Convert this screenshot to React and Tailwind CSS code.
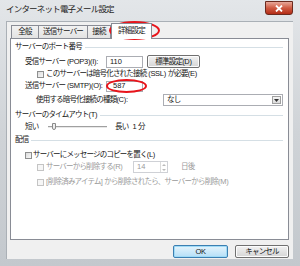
import React from "react";

const F = { fontFamily: "'Liberation Sans', 'Noto Sans CJK JP', sans-serif" };

function T({ children }) {
  const parts = String(children).split(/([\x20-\x7e]+)/);
  return (
    <>
      {parts.map((p, i) =>
        /^[\x20-\x7e]+$/.test(p) ? (
          <span key={i} className="tracking-[-0.3px]">{p}</span>
        ) : (
          <React.Fragment key={i}>{p}</React.Fragment>
        )
      )}
    </>
  );
}

function Check({ disabled }) {
  return (
    <span
      className={
        "inline-block w-[7px] h-[7px] shrink-0 border " +
        (disabled
          ? "border-[#c4c4c4] bg-[#f6f6f6]"
          : "border-[#8e8f8f] bg-gradient-to-br from-[#dcdcdc] to-[#f8f8f8]")
      }
    />
  );
}

function Header({ children }) {
  return (
    <div className="h-[12px] flex items-center pl-[4px] pr-[5px]">
      <span className="whitespace-nowrap"><T>{children}</T></span>
      <span className="flex-1 h-px bg-[#d5dfe5] ml-[3px]" />
    </div>
  );
}

function Btn({ children, def, className = "" }) {
  return (
    <div
      className={
        "flex items-center justify-center h-[13px] rounded-[2px] border " +
        (def
          ? "border-[#3c7fb1] bg-gradient-to-b from-[#e5f4fc] to-[#b5dff7] shadow-[inset_0_0_0_1px_#9fdbf7]"
          : "border-[#707070] bg-gradient-to-b from-[#f2f2f2] to-[#d5d5d5] shadow-[inset_0_0_0_1px_#fcfcfc]") +
        " " +
        className
      }
    >
      <T>{children}</T>
    </div>
  );
}

export default function App() {
  return (
    <div
      style={F}
      className="relative w-[300px] h-[266px] overflow-hidden text-[7.5px] tracking-[-0.8px] leading-none text-[#141414] bg-gradient-to-b from-[#e3e6e9] via-[#cfd3d7] to-[#c3c8cd]"
    >
      {/* title bar */}
      <div className="h-[21px] flex items-start">
        <span className="ml-[6px] mt-[5px] text-[8.5px] tracking-[-0.8px] text-[#222]">
          インターネット電子メール設定
        </span>
        <div className="ml-auto mr-[7px] mt-[1px] w-[28px] h-[14px] rounded-b-[3px] border border-[#6b2a1e] bg-gradient-to-b from-[#e6a89a] via-[#cf5a42] to-[#b32b14] flex items-center justify-center">
          <svg width="8" height="7" viewBox="0 0 8 7">
            <path d="M1 0.5 L7 6.5 M7 0.5 L1 6.5" stroke="#fff" strokeWidth="1.8" />
          </svg>
        </div>
      </div>

      {/* client */}
      <div className="mx-[6px] w-[287px] h-[238px] bg-[#f0f0f0] pt-[1px] border-l border-t border-[#aab0b6]">
        {/* tabs */}
        <div className="flex items-end h-[16px] pl-[4px]">
          <div className="w-[28px] h-[13px] mb-[1px] border border-b-0 border-[#898c95] bg-gradient-to-b from-[#f2f2f2] to-[#e3e3e3] flex items-center justify-center">
            全般
          </div>
          <div className="w-[49px] h-[13px] mb-[1px] border border-b-0 border-l-0 border-[#898c95] bg-gradient-to-b from-[#f2f2f2] to-[#e3e3e3] flex items-center justify-center">
            送信サーバー
          </div>
          <div className="w-[23px] h-[13px] mb-[1px] border border-b-0 border-l-0 border-[#898c95] bg-gradient-to-b from-[#f2f2f2] to-[#e3e3e3] flex items-center justify-center">
            接続
          </div>
          <div className="relative z-10 w-[41px] h-[16px] border border-b-0 border-[#898c95] bg-white flex items-center justify-center pb-[1px]">
            詳細設定
          </div>
        </div>

        {/* panel */}
        <div className="relative -mt-[1px] ml-[3px] w-[279px] h-[202px] border border-[#898c95] bg-white pt-[2px]">
          <Header>サーバーのポート番号</Header>

          <div className="mt-[2px] h-[13px] flex items-center pl-[14px]">
            <span className="w-[81px] whitespace-nowrap"><T>受信サーバー (POP3)(I):</T></span>
            <div className="w-[37px] h-[12px] border border-[#abadb3] flex items-center pl-[3px] tracking-[0px]">110</div>
            <Btn className="ml-[4px] w-[53px]">標準設定(D)</Btn>
          </div>

          <div className="h-[12px] flex items-center pl-[26px]">
            <Check />
            <span className="ml-[2px] whitespace-nowrap">
              <T>このサーバーは暗号化された接続 (SSL) が必要(E)</T>
            </span>
          </div>

          <div className="h-[12px] flex items-center pl-[14px]">
            <span className="w-[81px] whitespace-nowrap"><T>送信サーバー (SMTP)(O):</T></span>
            <div className="w-[37px] h-[11px] border border-[#abadb3] flex items-center pl-[6px] tracking-[0px]">587</div>
          </div>

          <div className="mt-[2px] h-[12px] flex items-center pl-[25px]">
            <span className="w-[127px] whitespace-nowrap"><T>使用する暗号化接続の種類(C):</T></span>
            <div className="w-[120px] h-[12px] border border-[#abadb3] flex items-center pl-[3px]">
              <span className="flex-1">なし</span>
              <div className="w-[9px] h-[8px] mr-[1px] border border-[#a0a0a0] bg-gradient-to-b from-[#f4f4f4] to-[#dcdcdc] flex items-center justify-center">
                <svg width="5" height="3" viewBox="0 0 5 3">
                  <path d="M0 0 H5 L2.5 3 Z" fill="#333" />
                </svg>
              </div>
            </div>
          </div>

          <div className="mt-[3px]">
            <Header>サーバーのタイムアウト(T)</Header>
          </div>

          <div className="h-[11px] flex items-center pl-[14px]">
            <span className="w-[23px]">短い</span>
            <div className="relative w-[59px] h-[7px] flex items-center">
              <div className="w-full h-[2px] border-t border-b border-t-[#a0a0a0] border-b-[#e8e8e8] bg-[#d8d8d8]" />
              <div className="absolute left-[4px] top-0 w-[4px] h-[7px] border border-[#8a8a8a] bg-[#eeeeee] rounded-b-[2px]" />
            </div>
            <span className="ml-[8px]">長い</span>
            <span className="ml-[4px]"><T>1 分</T></span>
          </div>

          <div className="mt-[2px]">
            <Header>配信</Header>
          </div>

          <div className="mt-[3px] h-[12px] flex items-center pl-[14px]">
            <Check />
            <span className="ml-[1px] whitespace-nowrap"><T>サーバーにメッセージのコピーを置く(L)</T></span>
          </div>

          <div className="h-[12px] flex items-center pl-[26px] text-[#9a9a9a]">
            <Check disabled />
            <span className="ml-[2px] w-[87px] whitespace-nowrap"><T>サーバーから削除する(R)</T></span>
            <div className="w-[35px] h-[12px] border border-[#cfd1d6] flex items-center pl-[3px] tracking-[0px]">
              <span className="flex-1">14</span>
              <div className="w-[7px] h-[10px] border-l border-[#dcdcdc] flex flex-col items-center justify-around">
                <svg width="4" height="2" viewBox="0 0 4 2"><path d="M0 2 L2 0 L4 2Z" fill="#bbb" /></svg>
                <svg width="4" height="2" viewBox="0 0 4 2"><path d="M0 0 L4 0 L2 2Z" fill="#bbb" /></svg>
              </div>
            </div>
            <span className="ml-[13px]">日後</span>
          </div>

          <div className="mt-[3px] h-[12px] flex items-center pl-[26px] text-[#9a9a9a]">
            <Check disabled />
            <span className="ml-[2px] whitespace-nowrap">
              <T>[削除済みアイテム] から削除されたら、サーバーから削除(M)</T>
            </span>
          </div>
        </div>

        {/* buttons */}
        <div className="mt-[5px] flex justify-end gap-[7px] pr-[4px]">
          <Btn def className="w-[55px]">OK</Btn>
          <Btn className="w-[54px]">キャンセル</Btn>
        </div>
      </div>

      {/* red annotation ovals */}
      <div className="absolute left-[109px] top-[21px] w-[51px] h-[19px] rounded-[50%] border-2 border-[#e8141b]" />
      <div className="absolute left-[106px] top-[79px] w-[41px] h-[14px] rounded-[50%] border-2 border-[#e8141b]" />
    </div>
  );
}
